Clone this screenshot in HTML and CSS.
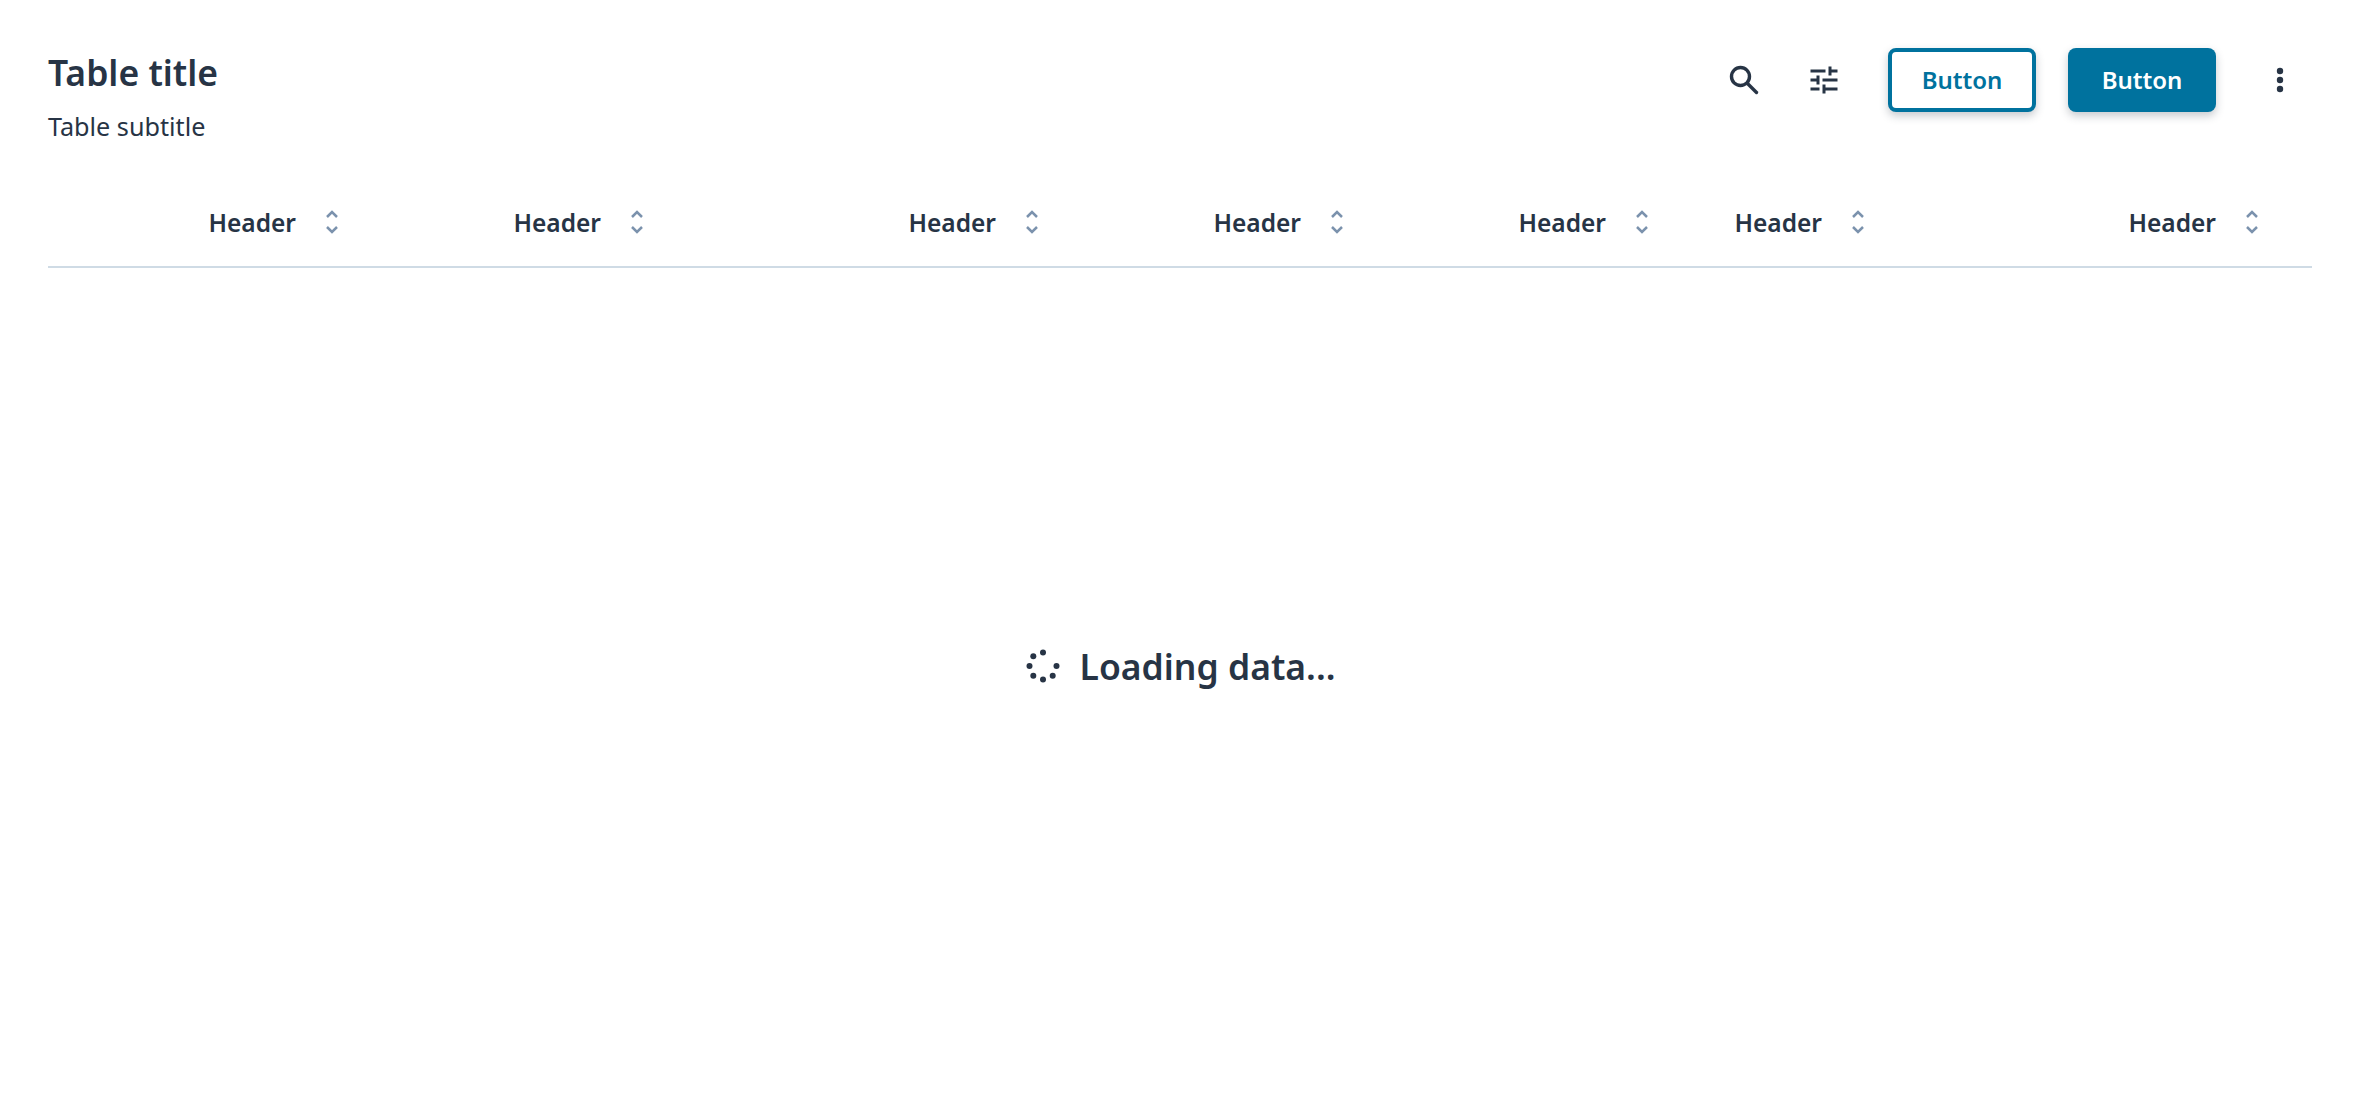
FILE: index.html
```html
<!DOCTYPE html>
<html lang="en">
<head>
  <meta charset="UTF-8">
  <meta name="viewport" content="width=device-width, initial-scale=1.0">
  <title>Table loading</title>
  <link rel="stylesheet" href="styles.css">
</head>
<body>

  <div class="page">
    <!-- Title and actions -->
    <div class="toolbar">
      <div class="titles">
        <h1>Table title</h1>
        <p>Table subtitle</p>
      </div>
      <div class="actions">
        <button class="icon-btn" aria-label="Search">
          <svg viewBox="0 0 36 36" width="36" height="36"><circle cx="14.5" cy="14.5" r="9" fill="none" stroke="#273445" stroke-width="3.4"/><path d="M21.5 21.5 L30.5 30.5" fill="none" stroke="#273445" stroke-width="3.4" stroke-linecap="round"/></svg>
        </button>
        <button class="icon-btn" aria-label="Filter">
          <svg viewBox="0 0 24 24" width="36" height="36"><path fill="#273445" d="M3 17v2h6v-2H3zM3 5v2h10V5H3zm10 16v-2h8v-2h-8v-2h-2v6h2zM7 9v2H3v2h4v2h2V9H7zm14 4v-2H11v2h10zm-6-4h2V7h4V5h-4V3h-2v6z"/></svg>
        </button>
        <button class="btn btn-outline">Button</button>
        <button class="btn btn-solid">Button</button>
        <button class="icon-btn icon-btn-last" aria-label="More">
          <svg viewBox="0 0 36 36" width="36" height="36"><circle cx="18" cy="9" r="3.2" fill="#273445"/><circle cx="18" cy="18" r="3.2" fill="#273445"/><circle cx="18" cy="27" r="3.2" fill="#273445"/></svg>
        </button>
      </div>
    </div>

    <!-- Header row -->
    <div class="table-head">
      <div class="cell">Header <svg class="sort" viewBox="0 0 16 28" width="16" height="28"><path d="M3 9 L8 4 L13 9 M3 19 L8 24 L13 19"/></svg></div>
      <div class="cell">Header <svg class="sort" viewBox="0 0 16 28" width="16" height="28"><path d="M3 9 L8 4 L13 9 M3 19 L8 24 L13 19"/></svg></div>
      <div class="cell">Header <svg class="sort" viewBox="0 0 16 28" width="16" height="28"><path d="M3 9 L8 4 L13 9 M3 19 L8 24 L13 19"/></svg></div>
      <div class="cell">Header <svg class="sort" viewBox="0 0 16 28" width="16" height="28"><path d="M3 9 L8 4 L13 9 M3 19 L8 24 L13 19"/></svg></div>
      <div class="cell">Header <svg class="sort" viewBox="0 0 16 28" width="16" height="28"><path d="M3 9 L8 4 L13 9 M3 19 L8 24 L13 19"/></svg></div>
      <div class="cell">Header <svg class="sort" viewBox="0 0 16 28" width="16" height="28"><path d="M3 9 L8 4 L13 9 M3 19 L8 24 L13 19"/></svg></div>
      <div class="cell">Header <svg class="sort" viewBox="0 0 16 28" width="16" height="28"><path d="M3 9 L8 4 L13 9 M3 19 L8 24 L13 19"/></svg></div>
    </div>

    <!-- Loading state -->
    <div class="loading">
      <svg class="spinner" viewBox="0 0 36 36" width="36" height="36">
        <circle cx="18" cy="4.5" r="3"/>
        <circle cx="8.3" cy="8.3" r="3"/>
        <circle cx="4.5" cy="18" r="3"/>
        <circle cx="8.3" cy="27.7" r="3"/>
        <circle cx="18" cy="31.5" r="3"/>
        <circle cx="27.7" cy="27.7" r="3"/>
        <circle cx="31.5" cy="18" r="3"/>
      </svg>
      <span>Loading data...</span>
    </div>
  </div>

</body>
</html>
```

FILE: styles.css
```css
body {
  margin: 0;
  background-color: white;
  font-family: "Noto Sans", Arial, sans-serif;
  color: #273445;
}
.page {
  height: 1116px;
  box-sizing: border-box;
  padding: 48px;
  display: flex;
  flex-direction: column;
}
.toolbar {
  display: flex;
  justify-content: space-between;
  align-items: flex-start;
  height: 130px;
}
h1 {
  margin: 4px 0 0;
  font-size: 35.5px;
  line-height: 40px;
  font-weight: 600;
}
.titles p {
  margin: 16px 0 0;
  font-size: 25.2px;
  line-height: 36px;
}
.actions {
  display: flex;
  align-items: center;
  gap: 16px;
}
.icon-btn {
  width: 64px;
  height: 64px;
  padding: 0;
  border: none;
  background: none;
  display: flex;
  align-items: center;
  justify-content: center;
}
.icon-btn-last {
  margin-left: 16px;
}
.btn {
  width: 148px;
  height: 64px;
  padding: 0 0 2px;
  border-radius: 8px;
  font-family: inherit;
  font-size: 24px;
  font-weight: 600;
  margin-left: 16px;
  box-shadow: 0 4px 8px rgba(37, 48, 62, 0.25);
}
.btn-outline {
  background-color: white;
  color: #00729e;
  border: 4px solid #00729e;
}
.btn-solid {
  background-color: #00729e;
  color: white;
  border: none;
}
.table-head {
  display: grid;
  grid-template-columns: 348px 305px 395px 305px 305px 216px 1fr;
  height: 88px;
  border-bottom: 2px solid #cfdbe5;
}
.cell {
  display: flex;
  align-items: center;
  justify-content: flex-end;
  gap: 28px;
  padding-right: 56px;
  font-size: 24.5px;
  font-weight: 600;
}
.cell:last-child {
  padding-right: 52px;
}
.sort {
  fill: none;
  stroke: #7b92ad;
  stroke-width: 2.5;
}
.loading {
  flex: 1;
  display: flex;
  align-items: center;
  justify-content: center;
  gap: 19px;
  padding-bottom: 5px;
  font-size: 35.5px;
  font-weight: 600;
}
.spinner {
  fill: #273445;
}
```
